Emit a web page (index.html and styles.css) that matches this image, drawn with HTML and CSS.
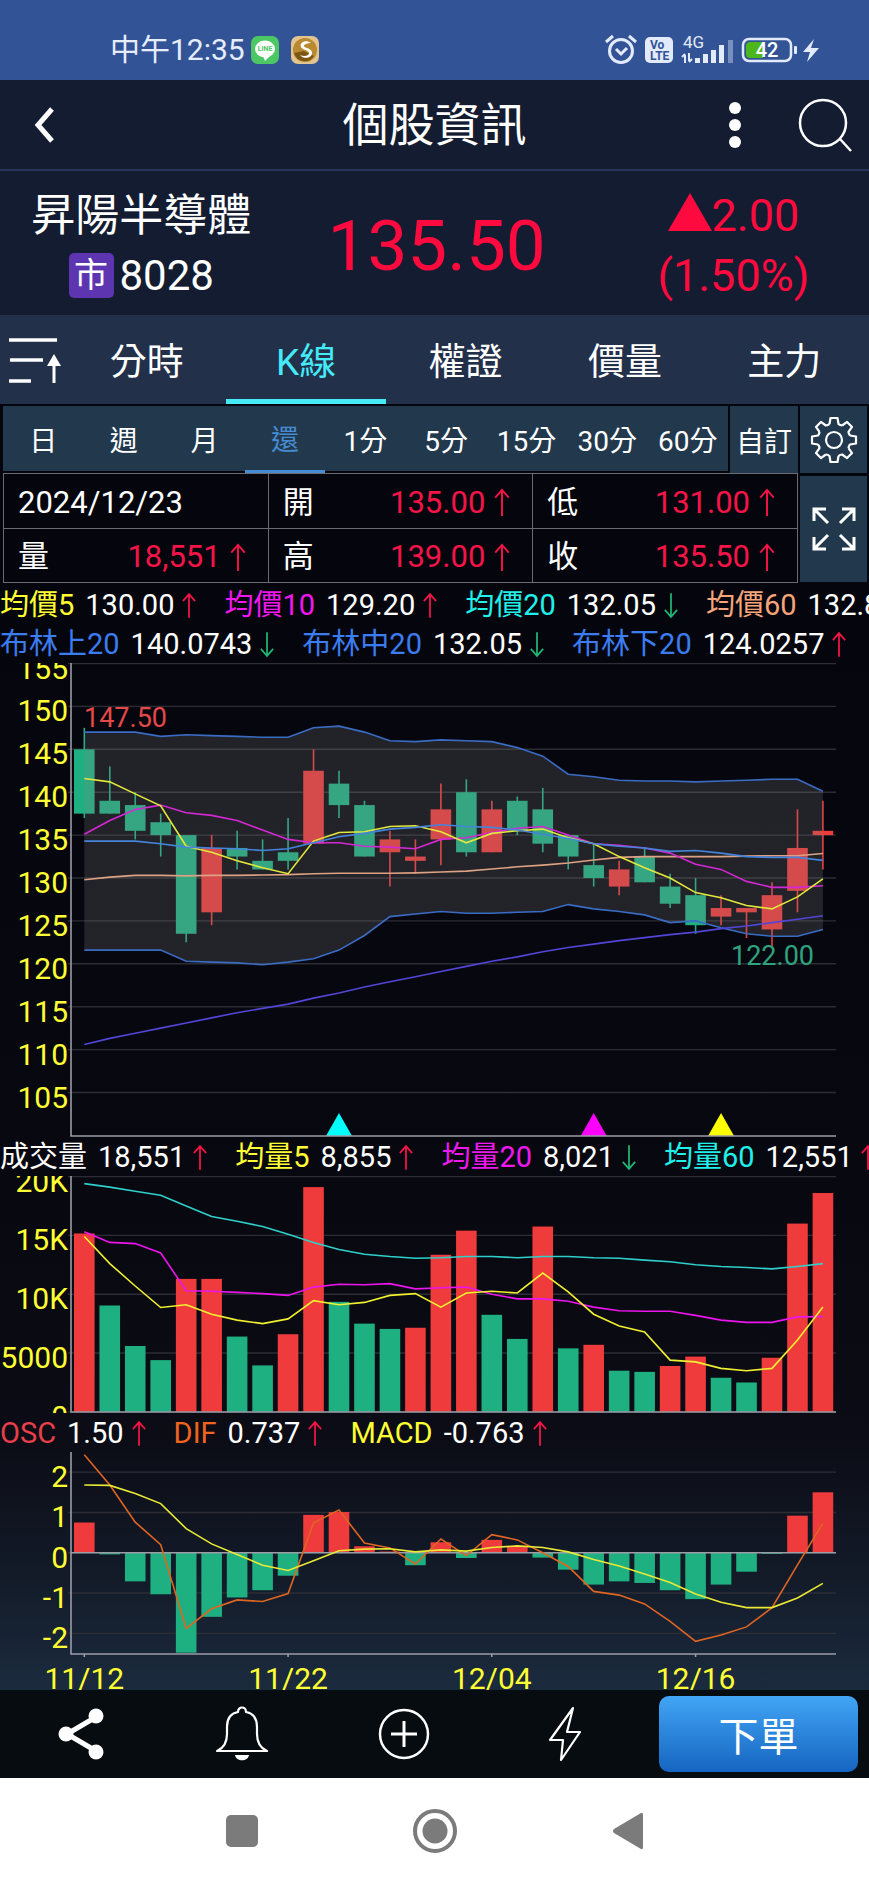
FILE: index.html
```html
<!DOCTYPE html>
<html lang="zh-Hant">
<head>
<meta charset="utf-8">
<meta name="viewport" content="width=device-width, initial-scale=1">
<title>個股資訊</title>
<link rel="stylesheet" href="styles.css">
</head>
<body>
<svg class="defs" width="0" height="0" aria-hidden="true">
  <symbol id="arrow" viewBox="0 0 16 30"><path d="M8 29V2M1 10L8 2L15 10" fill="none" stroke="currentColor" stroke-width="2"/></symbol>
  <path id="tooth" d="M-4.5-16L-3.5-22H3.5L4.5-16Q6-14.6 8.1-14.5"/>
</svg>

<div class="status">
  <div class="status-side">
    <span class="clock">中午12:35</span>
    <svg class="app-icon" viewBox="0 0 28 28" role="img" aria-label="LINE">
      <rect width="28" height="28" rx="7" fill="#4cc764"/>
      <ellipse cx="14" cy="13" rx="10" ry="8.5" fill="#fff"/><path d="M12 20h7l-5 5z" fill="#fff"/>
      <text x="14" y="15" class="line-text">LINE</text>
    </svg>
    <svg class="app-icon second" viewBox="0 0 28 28" role="img" aria-label="證券">
      <rect width="28" height="28" rx="7" fill="#e2c48e"/>
      <circle cx="14" cy="14" r="12" fill="#b98a2f"/>
      <path d="M3 17a11 11 0 0 0 20 3L13 15z" fill="#7c5613"/>
      <path d="M20 7c-5-4-12-1-10 4 1 3 8 3 8 6s-5 4-9 2c4 5 13 3 12-3-1-4-8-4-8-6s4-3 7-3z" fill="#fff"/>
    </svg>
  </div>
  <div class="status-side right">
    <svg width="34" height="34" viewBox="0 0 34 34" fill="none" stroke="#e3eafb" stroke-width="3"><circle cx="17" cy="18" r="11.5"/><path d="M12 16l5 5 6-6M2 9l7-6M32 9l-7-6"/></svg>
    <svg width="28" height="26" viewBox="0 0 28 26"><rect width="28" height="26" rx="5" fill="#e3eafb"/><text x="5" y="12" class="volte">Vo</text><text x="5" y="23" class="volte">LTE</text></svg>
    <svg width="54" height="32" viewBox="0 0 54 32">
      <text x="3" y="14" class="network">4G</text>
      <path d="M5 21v8M2 23l3-3M9 19v8M12 25l-3 3" fill="none" stroke="#e3eafb" stroke-width="2"/>
      <g fill="#e3eafb"><rect x="15" y="24" width="5" height="5"/><rect x="23" y="20" width="5" height="9"/><rect x="31" y="16" width="5" height="13"/><rect x="39" y="11" width="5" height="18"/><rect x="48" y="6" width="5" height="23" opacity=".4"/></g>
    </svg>
    <svg width="80" height="28" viewBox="0 0 80 28">
      <rect x="2" y="3" width="48" height="22" rx="6" fill="none" stroke="#e3eafb" stroke-width="2.5"/>
      <path d="M9 6h13v16H9a4 4 0 0 1-4-4v-8a4 4 0 0 1 4-4z" fill="#4cb71c"/><rect x="53" y="10" width="3" height="8" rx="1" fill="#e3eafb"/>
      <text x="26" y="21" class="charge">42</text>
      <path d="M73 3L62 16h7l-3 10 12-14h-8z" fill="#e3eafb"/>
    </svg>
  </div>
</div>

<header class="header">
  <button class="icon-btn" aria-label="返回"><svg width="24" height="38" viewBox="0 0 24 38"><path d="M20 3L6 19L20 35" fill="none" stroke="#fff" stroke-width="5"/></svg></button>
  <h1>個股資訊</h1>
  <div class="header-actions">
    <button class="icon-btn" aria-label="更多"><svg width="14" height="48" viewBox="0 0 14 48" fill="#fff"><circle cx="7" cy="7" r="6"/><circle cx="7" cy="24" r="6"/><circle cx="7" cy="41" r="6"/></svg></button>
    <button class="icon-btn" aria-label="搜尋"><svg width="56" height="56" viewBox="0 0 56 56" fill="none" stroke="#fff" stroke-width="2.5"><circle cx="26" cy="26" r="23"/><path d="M43 42L54 54"/></svg></button>
  </div>
</header>

<section class="quote">
  <div>
    <div class="stock-name">昇陽半導體</div>
    <div class="stock-code"><span class="market">市</span>8028</div>
  </div>
  <div class="price">135.50</div>
  <div class="change">
    <div><svg width="44" height="38" viewBox="0 0 44 38"><path d="M22 0L44 38H0z" fill="currentColor"/></svg>2.00</div>
    <div>(1.50%)</div>
  </div>
</section>

<nav class="tabs">
  <button class="sort" aria-label="排序"><svg width="54" height="50" viewBox="0 0 54 50" fill="none" stroke="#fff"><path d="M2 6h48M3 26h33M2 47h22" stroke-width="3.5"/><path d="M47 49V26" stroke-width="3"/><path d="M47 20l7 12H40z" fill="#fff" stroke="none"/></svg></button>
  <button>分時</button><button class="active">K線</button><button>權證</button><button>價量</button><button>主力</button>
</nav>

<section class="controls">
  <div class="periods">
    <button>日</button><button>週</button><button>月</button><button class="active">還</button><button>1分</button><button>5分</button><button>15分</button><button>30分</button><button>60分</button>
  </div>
  <button class="tool">自訂</button>
  <button class="tool" aria-label="設定"><svg width="48" height="48" viewBox="-24 -24 48 48" fill="none" stroke="#fff" stroke-width="2.2" stroke-linejoin="round"><use href="#tooth"/><use href="#tooth" transform="rotate(45)"/><use href="#tooth" transform="rotate(90)"/><use href="#tooth" transform="rotate(135)"/><use href="#tooth" transform="rotate(180)"/><use href="#tooth" transform="rotate(225)"/><use href="#tooth" transform="rotate(270)"/><use href="#tooth" transform="rotate(315)"/><circle r="8"/></svg></button>
  <table class="ohlc">
    <tr>
      <td><div class="cell">2024/12/23</div></td>
      <td><div class="cell">開<span class="up">135.00<svg><use href="#arrow"/></svg></span></div></td>
      <td><div class="cell">低<span class="up">131.00<svg><use href="#arrow"/></svg></span></div></td>
    </tr>
    <tr>
      <td><div class="cell">量<span class="up">18,551<svg><use href="#arrow"/></svg></span></div></td>
      <td><div class="cell">高<span class="up">139.00<svg><use href="#arrow"/></svg></span></div></td>
      <td><div class="cell">收<span class="up">135.50<svg><use href="#arrow"/></svg></span></div></td>
    </tr>
  </table>
  <button class="tool expand" aria-label="全螢幕"><svg width="48" height="48" viewBox="0 0 48 48" fill="none" stroke="#fff" stroke-width="3"><path d="M4 16V4H16M4 4L18 18M32 4H44V16M44 4L30 18M4 32V44H16M4 44L18 30M32 44H44V32M44 44L30 30"/></svg></button>
</section>

<main class="charts">
  <div class="legend">
    <span class="yellow">均價5</span><b>130.00</b><svg class="up"><use href="#arrow"/></svg>
    <span class="magenta">均價10</span><b>129.20</b><svg class="up"><use href="#arrow"/></svg>
    <span class="cyan">均價20</span><b>132.05</b><svg class="down"><use href="#arrow"/></svg>
    <span class="salmon">均價60</span><b>132.87</b><svg class="up"><use href="#arrow"/></svg>
  </div>
  <div class="legend">
    <span class="blue">布林上20</span><b>140.0743</b><svg class="down"><use href="#arrow"/></svg>
    <span class="blue">布林中20</span><b>132.05</b><svg class="down"><use href="#arrow"/></svg>
    <span class="blue">布林下20</span><b>124.0257</b><svg class="up"><use href="#arrow"/></svg>
  </div>
  <svg class="chart" id="price-chart" viewBox="0 0 869 474" role="img" aria-label="K線圖"></svg>
  <div class="legend">
    <span>成交量</span><b>18,551</b><svg class="up"><use href="#arrow"/></svg>
    <span class="yellow">均量5</span><b>8,855</b><svg class="up"><use href="#arrow"/></svg>
    <span class="magenta">均量20</span><b>8,021</b><svg class="down"><use href="#arrow"/></svg>
    <span class="cyan">均量60</span><b>12,551</b><svg class="up"><use href="#arrow"/></svg>
  </div>
  <svg class="chart" id="volume-chart" viewBox="0 0 869 237" role="img" aria-label="成交量圖"></svg>
  <div class="legend">
    <span class="red">OSC</span><b>1.50</b><svg class="up"><use href="#arrow"/></svg>
    <span class="orange">DIF</span><b>0.737</b><svg class="up"><use href="#arrow"/></svg>
    <span class="yellow">MACD</span><b>-0.763</b><svg class="up"><use href="#arrow"/></svg>
  </div>
  <svg class="chart" id="macd-chart" viewBox="0 0 869 238" role="img" aria-label="MACD圖"></svg>
</main>

<footer class="actions">
  <button aria-label="分享"><svg width="52" height="56" viewBox="0 0 52 56"><path d="M41 11L12 28L41 45" fill="none" stroke="#fff" stroke-width="5"/><g fill="#fff"><circle cx="41" cy="10" r="7.5"/><circle cx="11" cy="28" r="7.5"/><circle cx="41" cy="46" r="7.5"/></g></svg></button>
  <button aria-label="提醒"><svg width="56" height="56" viewBox="0 0 56 56" fill="none" stroke="#fff" stroke-width="2.2" stroke-linejoin="round"><path d="M3 45C10 42 13 36 13 28V21C13 11 18 7 24 6C24 0 32 0 32 6C38 7 43 11 43 21V28C43 36 46 42 53 45Z"/><path d="M21 49H35C34 56 22 56 21 49Z" fill="#fff" stroke="none"/></svg></button>
  <button aria-label="新增"><svg width="54" height="54" viewBox="0 0 54 54" fill="none" stroke="#fff" stroke-width="2.5"><circle cx="27" cy="27" r="24"/><path d="M27 14V40M14 27H40" stroke-width="3"/></svg></button>
  <button aria-label="閃電下單"><svg width="36" height="58" viewBox="0 0 36 58" fill="none" stroke="#fff" stroke-width="2.2" stroke-linejoin="round"><path d="M26 3L3 35H16L14 55L33 27H20Z"/></svg></button>
  <button class="order">下單</button>
</footer>

<nav class="system">
  <button aria-label="最近"><svg viewBox="0 0 46 46"><rect x="7" y="7" width="32" height="32" rx="5" fill="#7b7b7b"/></svg></button>
  <button aria-label="主畫面"><svg viewBox="0 0 46 46"><circle cx="23" cy="23" r="20" fill="none" stroke="#7b7b7b" stroke-width="4"/><circle cx="23" cy="23" r="12.5" fill="#7b7b7b"/></svg></button>
  <button aria-label="返回"><svg viewBox="0 0 46 46"><path d="M9 21L36 5Q38 4 38 7V39Q38 42 36 41L9 25Q7 23 9 21Z" fill="#7b7b7b"/></svg></button>
</nav>
<script src="charts.js"></script>
</body>
</html>
```

FILE: styles.css
```css
* { box-sizing: border-box; }
body {
  margin: 0;
  background: #05060d;
  color: #fff;
  font-family: Roboto, "Noto Sans CJK TC", sans-serif;
}
button {
  display: flex;
  align-items: center;
  justify-content: center;
  margin: 0;
  padding: 0;
  border: 0;
  background: none;
  color: inherit;
  font: inherit;
  white-space: nowrap;
}
svg { display: block; flex: none; }
.defs { position: absolute; }

.status {
  display: flex;
  justify-content: space-between;
  height: 80px;
  padding: 20px 48px 0 110px;
  background: #325497;
}
.status-side { display: flex; align-items: center; }
.status-side.right { gap: 7px; }
.clock { color: #e6edfc; font-size: 30px; line-height: 40px; }
.app-icon { width: 28px; height: 28px; margin-left: 6px; }
.app-icon.second { margin-left: 12px; }
.line-text { font-size: 7px; font-weight: 700; fill: #4cc764; text-anchor: middle; }
.volte { font-size: 12px; font-weight: 700; fill: #325497; }
.network { font-size: 17px; fill: #e3eafb; }
.charge { font-size: 20px; font-weight: 500; fill: #fff; text-anchor: middle; }

.header {
  display: grid;
  grid-template-columns: 1fr auto 1fr;
  align-items: center;
  height: 91px;
  padding: 0 16px 0 32px;
  border-bottom: 2px solid #28345c;
  background: #131c30;
}
.header .icon-btn { justify-self: start; }
.header h1 { margin: 0 0 0 -16px; font-size: 46px; font-weight: 400; line-height: 60px; }
.header-actions { display: flex; justify-content: flex-end; align-items: center; gap: 55px; }

.quote {
  display: grid;
  grid-template-columns: 65fr 71fr 64fr;
  align-items: center;
  height: 144px;
  padding-top: 5px;
  background: #131c30;
  text-align: center;
}
.stock-name { font-size: 44px; line-height: 60px; }
.stock-code { display: flex; justify-content: center; align-items: center; gap: 6px; font-size: 42px; line-height: 60px; }
.market { width: 45px; border-radius: 5px; background: #5e35b1; font-size: 34px; line-height: 45px; }
.price { color: #ff0a3f; font-size: 71px; }
.change { padding-left: 7px; color: #ff0a3f; font-size: 45px; line-height: 60px; }
.change div { display: flex; justify-content: center; align-items: center; }
.change svg { margin-bottom: 8px; }

.tabs {
  display: grid;
  grid-template-columns: 67px repeat(5, 1fr);
  height: 89px;
  padding-right: 5px;
  background: #22304a;
  font-size: 37px;
}
.tabs button { padding-top: 3px; border-bottom: 5px solid transparent; }
.tabs .active { border-color: #45e9f8; color: #45e9f8; }

.controls {
  display: grid;
  grid-template-columns: 1fr 68px 67px;
  grid-template-rows: 67px 110px;
  column-gap: 2px;
  padding: 2px 2px 2px 3px;
  font-size: 28px;
}
.periods { display: grid; grid-template-columns: repeat(9, 1fr); background: #22394d; }
.periods button { border-bottom: 2px solid #05060d; }
.periods .active { border-bottom: 3px solid #468cd2; color: #468cd2; }
.tool { background: #22394d; }
.expand { margin: 3px 0 1px; }
.ohlc {
  grid-column: span 2;
  width: 100%;
  height: 110px;
  table-layout: fixed;
  border-collapse: collapse;
  font-size: 31px;
  line-height: 40px;
}
.ohlc td { padding: 4px 0 0; border: 1px solid #6c6c70; }
.cell { display: flex; justify-content: space-between; padding: 0 22px 0 14px; }
.cell span { display: flex; align-items: center; gap: 9px; }
.cell svg { width: 16px; height: 29px; }
.up { color: #f51448; }
.down { color: #1fb573; }

.charts {
  overflow: hidden;
  background: linear-gradient(#05060d 0%, #080810 55%, #0b0c15 77%, #131b29 90%, #1b2b3e 100%);
}
.legend {
  display: flex;
  align-items: center;
  height: 39px;
  padding-top: 2px;
  font-size: 29px;
  line-height: 37px;
  white-space: nowrap;
}
.legend b { margin-left: 11px; font-weight: 400; }
.legend svg { width: 14px; height: 27px; margin: 0 28px 0 8px; }
.legend .down { transform: rotate(180deg); margin: 0 8px 0 28px; order: 0; }
.legend svg.down { margin: 0 28px 0 8px; }
.yellow { color: #ff3; }
.magenta { color: #f018f0; }
.cyan { color: #20f0ea; }
.salmon { color: #f5a57a; }
.blue { color: #3b7cf0; }
.red { color: #e8404a; }
.orange { color: #f0641e; }

.chart { width: 100%; height: auto; font-size: 30px; }
.chart polyline { fill: none; stroke-width: 1.6; }
.chart .grid { stroke: #2c2d35; stroke-width: 1.4; }
.chart .axis { fill: none; stroke: #9a9ca6; stroke-width: 1.6; }
.chart .tick { fill: #ff3; }
.chart .note { font-size: 27px; }

.actions {
  display: grid;
  grid-template-columns: repeat(4, 1fr) 212px;
  align-items: center;
  height: 88px;
  padding-right: 11px;
  background: #060c10;
}
.actions .order {
  height: 76px;
  margin-left: 13px;
  border-radius: 10px;
  background: linear-gradient(#42a5f5, #1565c0);
  font-size: 40px;
}
.system {
  display: flex;
  justify-content: center;
  align-items: center;
  gap: 147px;
  height: 105px;
  background: #fff;
}
.system svg { width: 46px; height: 46px; }
```

FILE: charts.js
```js
const LEFT = 71, RIGHT = 836, FIRST = 84.3, STEP = 25.47, BAR = 20.6;
const RED = '#ef3b3c', GREEN = '#1fb082';
const cx = i => FIRST + STEP * i;

const line = (data, y, color) =>
  `<polyline stroke="${color}" points="${data.map((v, i) => `${cx(i).toFixed(1)},${y(v).toFixed(1)}`).join(' ')}"/>`;
const bar = (i, top, bottom, color) =>
  `<rect x="${cx(i) - BAR / 2}" y="${top}" width="${BAR}" height="${Math.max(bottom - top, 1)}" fill="${color}"/>`;
const gridLine = (y) => `<path class="grid" d="M${LEFT - 3} ${y}H${RIGHT}"/>`;
const label = (text, y) => `<text class="tick" x="68" y="${y + 15}" text-anchor="end">${text}</text>`;

// top, bottom, high, low, rising
const candles = [
  [145,137.5,147.5,137,0],[139,137.5,143,137.5,0],[138.5,135.5,140,134.5,0],[136.5,135,137.5,132.5,0],
  [135,123.5,135,122.5,0],[133.5,126,135,124.5,1],[133.5,132.5,135.5,131,0],[132,131,134.5,131,0],
  [133,132,137,131,0],[142.5,134,145,134,1],[141,138.5,142.5,137,0],[138.5,132.5,139,132.5,0],
  [134.5,133,135.5,129,1],[132.5,132,134.5,130.5,1],[138,134.5,141,131.5,1],[140,133,141.5,132.5,0],
  [138,133,139,133,1],[139,135.5,139.5,135,0],[138,134,140.5,133,0],[135,132.5,135,131,0],
  [131.5,130,134,129,0],[131,129,132,128,1],[132.5,129.5,133.5,129.5,0],[129,127,130.5,126.5,0],
  [128,124.5,130,123.5,0],[126.5,125.5,128,124.5,1],[126.5,126,126.5,123,1],[128,124,129.5,122,1],
  [133.5,128.5,138,126,1],[135.5,135,139,131,1]
];
const upper = [147,147,147,146.5,146.7,146.6,146.5,146.4,146.4,147.5,147.7,147,146,145.9,146.1,146,145.9,145.2,144.2,142.1,141.8,141.4,141.3,141.3,141.2,141.3,141.4,141.5,141.5,140.1];
const lower = [121.6,121.6,121.6,121.6,120.3,120.2,120.1,119.9,120.2,120.6,121.6,123.3,125.5,125.8,126.1,125.9,125.9,126,126.1,126.9,126.4,126.1,125.7,124.8,125,124.2,123.5,123.2,123.2,124];
const ma5 = [141.6,141.2,139.8,138.4,133.7,133,132,131.2,130.5,134.3,135.3,135.4,136,136.1,135.4,134.1,135.2,135.5,135.7,134.7,134,132.5,131.2,130,128.3,127.7,126.8,126.4,127.8,129.9];
const ma10 = [135.1,136.7,138,138.5,137.6,137.3,136.7,135.6,134.5,134.1,134.1,133.7,133.6,133.4,134.5,134.7,135.3,135.8,136,135,134,133.8,133.5,132.9,131.6,131,129.6,128.9,128.9,129.1];
const ma20 = [134.3,134.3,134.3,134,133.6,133.5,133.4,133.2,133.4,134.1,134.8,135.2,135.7,135.9,136.2,136,135.9,135.6,135.1,134.6,134,133.7,133.5,133.1,133.2,132.9,132.5,132.4,132.4,132.05];
const ma60 = [129.8,130.1,130.3,130.3,130.25,130.3,130.3,130.35,130.4,130.5,130.55,130.55,130.55,130.6,130.7,130.8,131.05,131.3,131.5,131.75,132.1,132.4,132.5,132.5,132.5,132.5,132.55,132.6,132.6,132.85];
const ma240 = [110.6,111.3,111.9,112.5,113.1,113.7,114.3,114.8,115.3,116,116.6,117.3,117.9,118.5,119.1,119.7,120.3,120.8,121.4,121.9,122.3,122.7,123.05,123.4,123.7,124.1,124.4,124.8,125.2,125.6];

function drawPrice() {
  const y = p => (155 - p) * 8.58 + 0.5;
  let s = '';
  for (let p = 155; p >= 105; p -= 5) s += gridLine(y(p)) + label(p, y(p));
  candles.forEach(([top, bottom, high, low, up], i) => {
    const c = up ? RED : GREEN;
    s += `<path d="M${cx(i)} ${y(high)}V${y(low)}" stroke="${c}" stroke-width="1.6"/>` + bar(i, y(top), y(bottom), c);
  });
  const edge = upper.map((v, i) => `${cx(i)},${y(v)}`).concat(lower.map((v, i) => `${cx(i)},${y(v)}`).reverse());
  s += `<polygon points="${edge.join(' ')}" fill="#808080" fill-opacity=".23"/>`;
  s += line(upper, y, '#3a6cc4') + line(lower, y, '#3a6cc4') + line(ma240, y, '#5146d8') + line(ma60, y, '#dda283');
  s += line(ma10, y, '#d328d3') + line(ma5, y, '#e3e83c') + line(ma20, y, '#4484dc');
  s += `<text class="note" x="84" y="64" fill="#e54848">147.50</text><text class="note" x="814" y="302" text-anchor="end" fill="#2fa37e">122.00</text>`;
  [[10, '#00ffff'], [20, '#ff00ff'], [25, '#ffff00']].forEach(([i, c]) => {
    s += `<path d="M${cx(i)} 450l13 23h-26z" fill="${c}"/>`;
  });
  s += `<path class="axis" d="M${LEFT} 0V473H${RIGHT}"/>`;
  document.getElementById('price-chart').innerHTML = s;
}

const volumes = [15.16,-9.04,-5.6,-4.4,11.3,11.3,-6.4,-3.95,6.6,19.1,-9.35,-7.5,-7.05,7.15,13.35,15.4,-8.25,-6.2,15.75,-5.4,5.7,-3.5,-3.4,3.9,4.7,-2.9,-2.5,4.6,16,18.6];
const vol5 = [14.9,12.6,10.7,8.87,9.1,8.3,7.8,7.5,7.9,9.46,9.1,9.3,9.9,10.05,8.9,10.1,10.25,10.1,11.8,10.2,8.3,7.3,6.8,4.4,4.25,3.7,3.5,3.7,6.1,8.9];
const vol20 = [15.3,14.4,14.3,13.5,10.3,10.25,10.15,10.05,9.9,10.6,10.85,10.8,10.9,10.45,10.55,10.6,10,9.6,9.6,9.4,8.9,8.6,8.55,8.55,8.2,7.8,7.6,7.6,8.07,8.1];
const vol60 = [19.4,19.1,18.75,18.4,17.5,16.6,16.2,15.75,15.1,14.4,13.8,13.4,13.2,13.06,13.1,13.2,13.2,13.1,13.2,13.2,13.1,13.06,12.9,12.75,12.5,12.35,12.27,12.15,12.35,12.6];

function drawVolume() {
  const y = v => (20 - v) * 11.77 + 0.5;
  let s = '';
  [[20, '20K'], [15, '15K'], [10, '10K'], [5, '5000'], [0, '0']].forEach(([v, t]) => { s += gridLine(y(v)) + label(t, y(v)); });
  // a negative sign marks a falling day
  volumes.forEach((v, i) => { s += bar(i, y(Math.abs(v)), y(0), v > 0 ? RED : GREEN); });
  s += line(vol60, y, '#2fd0cc') + line(vol20, y, '#ee14ee') + line(vol5, y, '#f0f030');
  s += `<path class="axis" d="M${LEFT} 0V236H${RIGHT}"/>`;
  document.getElementById('volume-chart').innerHTML = s;
}

const osc = [.75,-.04,-.71,-1.03,-2.48,-1.59,-1.11,-.93,-.57,.94,1.01,.16,.03,-.31,.26,-.13,.32,.16,-.12,-.42,-.79,-.71,-.75,-.93,-1.15,-.79,-.47,-.01,.92,1.5];
const dif = [2.43,1.68,.76,.2,-1.88,-1.39,-1.17,-1.21,-1.01,.74,1.06,.24,.12,-.28,.34,-.07,.45,.32,0,-.34,-.96,-1.05,-1.27,-1.7,-2.2,-2.04,-1.84,-1.36,-.3,.73];
const macd = [1.68,1.67,1.47,1.22,.6,.22,-.04,-.31,-.44,-.2,.05,.09,.1,.02,.07,.04,.13,.17,.13,.02,-.17,-.33,-.53,-.74,-1.02,-1.23,-1.36,-1.36,-1.12,-.76];

function drawMacd() {
  const y = v => (2.5 - v) * 40.3;
  let s = '';
  [2, 1, 0, -1, -2].forEach(v => { s += gridLine(y(v)) + label(v, y(v)); });
  osc.forEach((v, i) => { s += bar(i, y(Math.max(v, 0)), y(Math.min(v, 0)), v > 0 ? RED : GREEN); });
  s += `<path class="axis" d="M${LEFT} ${y(0)}H${RIGHT}"/>`;
  s += line(dif, y, '#df6522') + line(macd, y, '#eaea35');
  s += `<path class="axis" d="M${LEFT} 0V202H${RIGHT}"/>`;
  [[0, '11/12'], [8, '11/22'], [16, '12/04'], [24, '12/16']].forEach(([i, t]) => {
    s += `<path class="axis" d="M${cx(i)} 202v3"/><text class="tick" x="${cx(i)}" y="237" text-anchor="middle">${t}</text>`;
  });
  document.getElementById('macd-chart').innerHTML = s;
}

drawPrice();
drawVolume();
drawMacd();
```
